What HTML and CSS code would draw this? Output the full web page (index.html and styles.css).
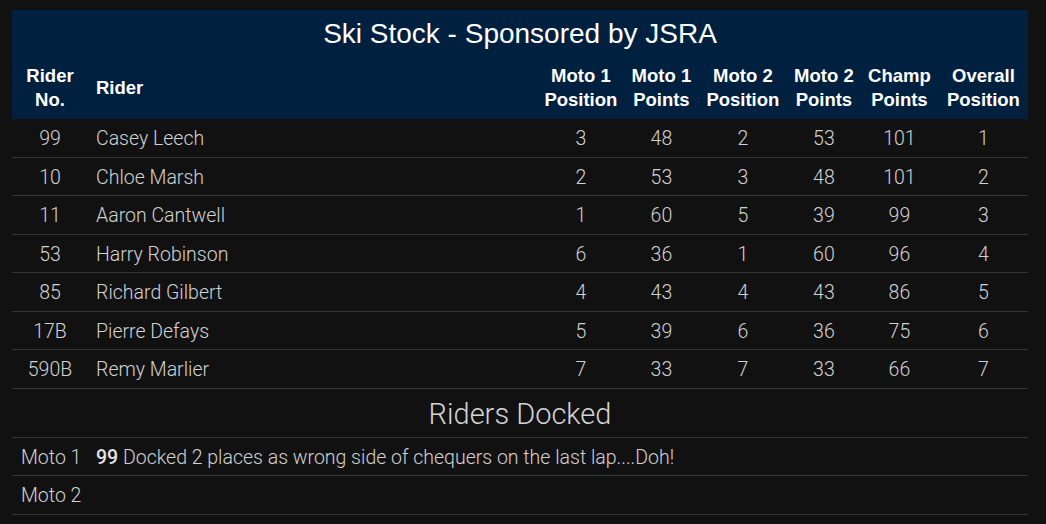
FILE: index.html
```html
<!DOCTYPE html>
<html lang="en">
<head>
<meta charset="utf-8">
<title>Ski Stock</title>
<link rel="stylesheet" href="styles.css">
</head>
<body>
<table class="results">
  <colgroup>
    <col class="c-no"><col class="c-rider"><col class="c-m1p"><col class="c-m1pts"><col class="c-m2p"><col class="c-m2pts"><col class="c-champ"><col class="c-overall">
  </colgroup>
  <thead>
    <tr class="title-row"><th colspan="8" class="title">Ski Stock - Sponsored by JSRA</th></tr>
    <tr class="head-row">
      <th>Rider<br>No.</th>
      <th class="left">Rider</th>
      <th>Moto 1<br>Position</th>
      <th>Moto 1<br>Points</th>
      <th>Moto 2<br>Position</th>
      <th>Moto 2<br>Points</th>
      <th>Champ<br>Points</th>
      <th>Overall<br>Position</th>
    </tr>
  </thead>
  <tbody>
    <tr><td>99</td><td class="left">Casey Leech</td><td>3</td><td>48</td><td>2</td><td>53</td><td>101</td><td>1</td></tr>
    <tr><td>10</td><td class="left">Chloe Marsh</td><td>2</td><td>53</td><td>3</td><td>48</td><td>101</td><td>2</td></tr>
    <tr><td>11</td><td class="left">Aaron Cantwell</td><td>1</td><td>60</td><td>5</td><td>39</td><td>99</td><td>3</td></tr>
    <tr><td>53</td><td class="left">Harry Robinson</td><td>6</td><td>36</td><td>1</td><td>60</td><td>96</td><td>4</td></tr>
    <tr><td>85</td><td class="left">Richard Gilbert</td><td>4</td><td>43</td><td>4</td><td>43</td><td>86</td><td>5</td></tr>
    <tr><td>17B</td><td class="left">Pierre Defays</td><td>5</td><td>39</td><td>6</td><td>36</td><td>75</td><td>6</td></tr>
    <tr><td>590B</td><td class="left">Remy Marlier</td><td>7</td><td>33</td><td>7</td><td>33</td><td>66</td><td>7</td></tr>
    <tr class="docked-head"><td colspan="8">Riders Docked</td></tr>
    <tr class="docked"><td>Moto 1</td><td colspan="7" class="left"><strong>99</strong> Docked 2 places as wrong side of chequers on the last lap....Doh!</td></tr>
    <tr class="docked"><td>Moto 2</td><td colspan="7" class="left"></td></tr>
  </tbody>
</table>
</body>
</html>
```
FILE: styles.css
```css
html, body {
  margin: 0;
  background: #111111;
}
body {
  padding: 10px 18px 10px 12px;
  font-family: Roboto, "Liberation Sans", sans-serif;
  font-weight: 300;
  color: #d2d2d2;
}
.results {
  width: 1016px;
  border-collapse: collapse;
  table-layout: fixed;
}
.c-no { width: 76px; }
.c-m1p { width: 88px; }
.c-m1pts { width: 73px; }
.c-m2p { width: 90px; }
.c-m2pts { width: 72px; }
.c-champ { width: 79px; }
.c-overall { width: 89px; }
.results th, .results td {
  text-align: center;
  padding: 8px 4px 6px;
  font-size: 19.5px;
  line-height: 23.5px;
  white-space: nowrap;
}
.results .left { text-align: left; padding-left: 8px; }
.results thead th {
  background: #002040;
  color: #ffffff;
  font-family: "Liberation Sans", Arial, sans-serif;
  font-weight: 700;
  font-size: 18.5px;
  line-height: 24px;
}
.head-row th { padding: 6px 4px 7px; }
.results .title {
  font-family: "Liberation Sans", Arial, sans-serif;
  font-weight: 400;
  font-size: 28px;
  line-height: 32px;
  padding: 8px 0 8px;
}
.results tbody td {
  border-bottom: 1px solid #363636;
}
.docked-head td {
  font-size: 29px;
  line-height: 32px;
  padding: 9px 0 7px;
  border-top: 1px solid #363636;
  color: #d4d4d4;
}
.docked td:first-child { text-align: left; padding-left: 9px; }
.docked strong { font-weight: 500; color: #e4e4e4; }
```
